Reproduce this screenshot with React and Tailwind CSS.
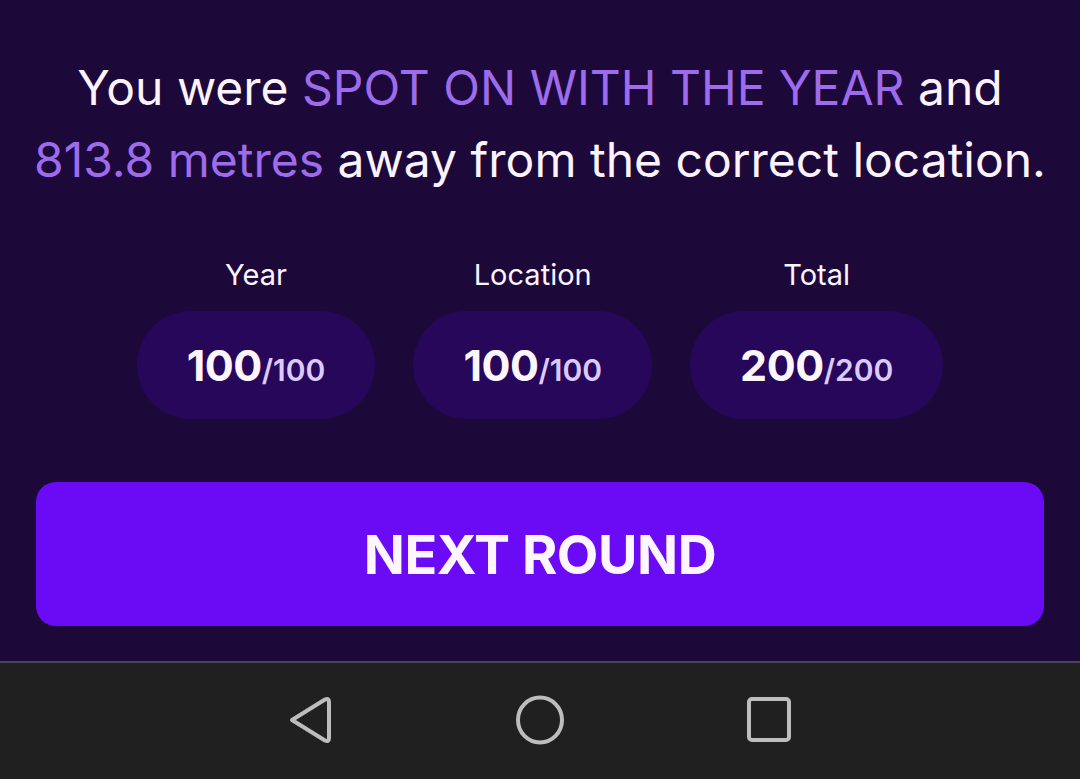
import React from 'react'

const scores = [
  { label: 'Year', value: 100, max: 100 },
  { label: 'Location', value: 100, max: 100 },
  { label: 'Total', value: 200, max: 200 },
]

function ScorePill({ label, value, max }) {
  return (
    <div className="flex flex-col items-center">
      <span className="text-[29px] leading-[34px] text-[#fbf3ff]">{label}</span>
      <div className="mt-[19px] h-[108px] px-[50px] rounded-full bg-[#26075a] flex items-center justify-center">
        <span className="text-[43px] font-bold text-[#fdf5ff] tracking-[-0.5px]">{value}</span>
        <span className="text-[30px] font-semibold text-[#dccaff] mt-[10px]">/{max}</span>
      </div>
    </div>
  )
}

function NavBar() {
  return (
    <nav className="h-[118px] bg-[#202020] border-t-2 border-[#4a4556] flex items-center justify-center gap-[182px] pb-[2px]">
      <svg width="48" height="56" viewBox="0 0 48 56" fill="none" stroke="#bdbdbd" strokeWidth="4" strokeLinejoin="round">
        <path d="M6 28 L39 7.5 Q43 5.5 43 10 L43 46 Q43 50.5 39 48.5 Z" />
      </svg>
      <svg width="48" height="56" viewBox="0 0 48 56" fill="none" stroke="#bdbdbd" strokeWidth="4">
        <ellipse cx="24" cy="28" rx="22" ry="22.5" />
      </svg>
      <svg width="48" height="56" viewBox="0 0 48 56" fill="none" stroke="#bdbdbd" strokeWidth="4">
        <rect x="3" y="7" width="40" height="41" rx="3" />
      </svg>
    </nav>
  )
}

export default function App() {
  return (
    <div className="h-[779px] w-[1080px] flex flex-col bg-[#1d0939] font-['Inter','Noto_Sans',sans-serif] overflow-hidden">
      <main className="flex-1 flex flex-col items-center pt-[52px] px-[36px]">
        <p className="-mx-[20px] text-[48px] leading-[72px] text-center text-[#fbf3ff]">
          You were <span className="text-[#9d6cec]">SPOT ON WITH THE YEAR</span> and{' '}
          <span className="text-[#9d6cec]">813.8 metres</span> away from the correct location.
        </p>
        <div className="mt-[62px] flex gap-[38px]">
          {scores.map((s) => (
            <ScorePill key={s.label} {...s} />
          ))}
        </div>
        <button className="mt-[63px] w-full h-[144px] rounded-[20px] bg-[#6b0bf5] text-[#fdf6ff] text-[54px] font-bold tracking-[-0.5px]">
          NEXT ROUND
        </button>
      </main>
      <NavBar />
    </div>
  )
}
